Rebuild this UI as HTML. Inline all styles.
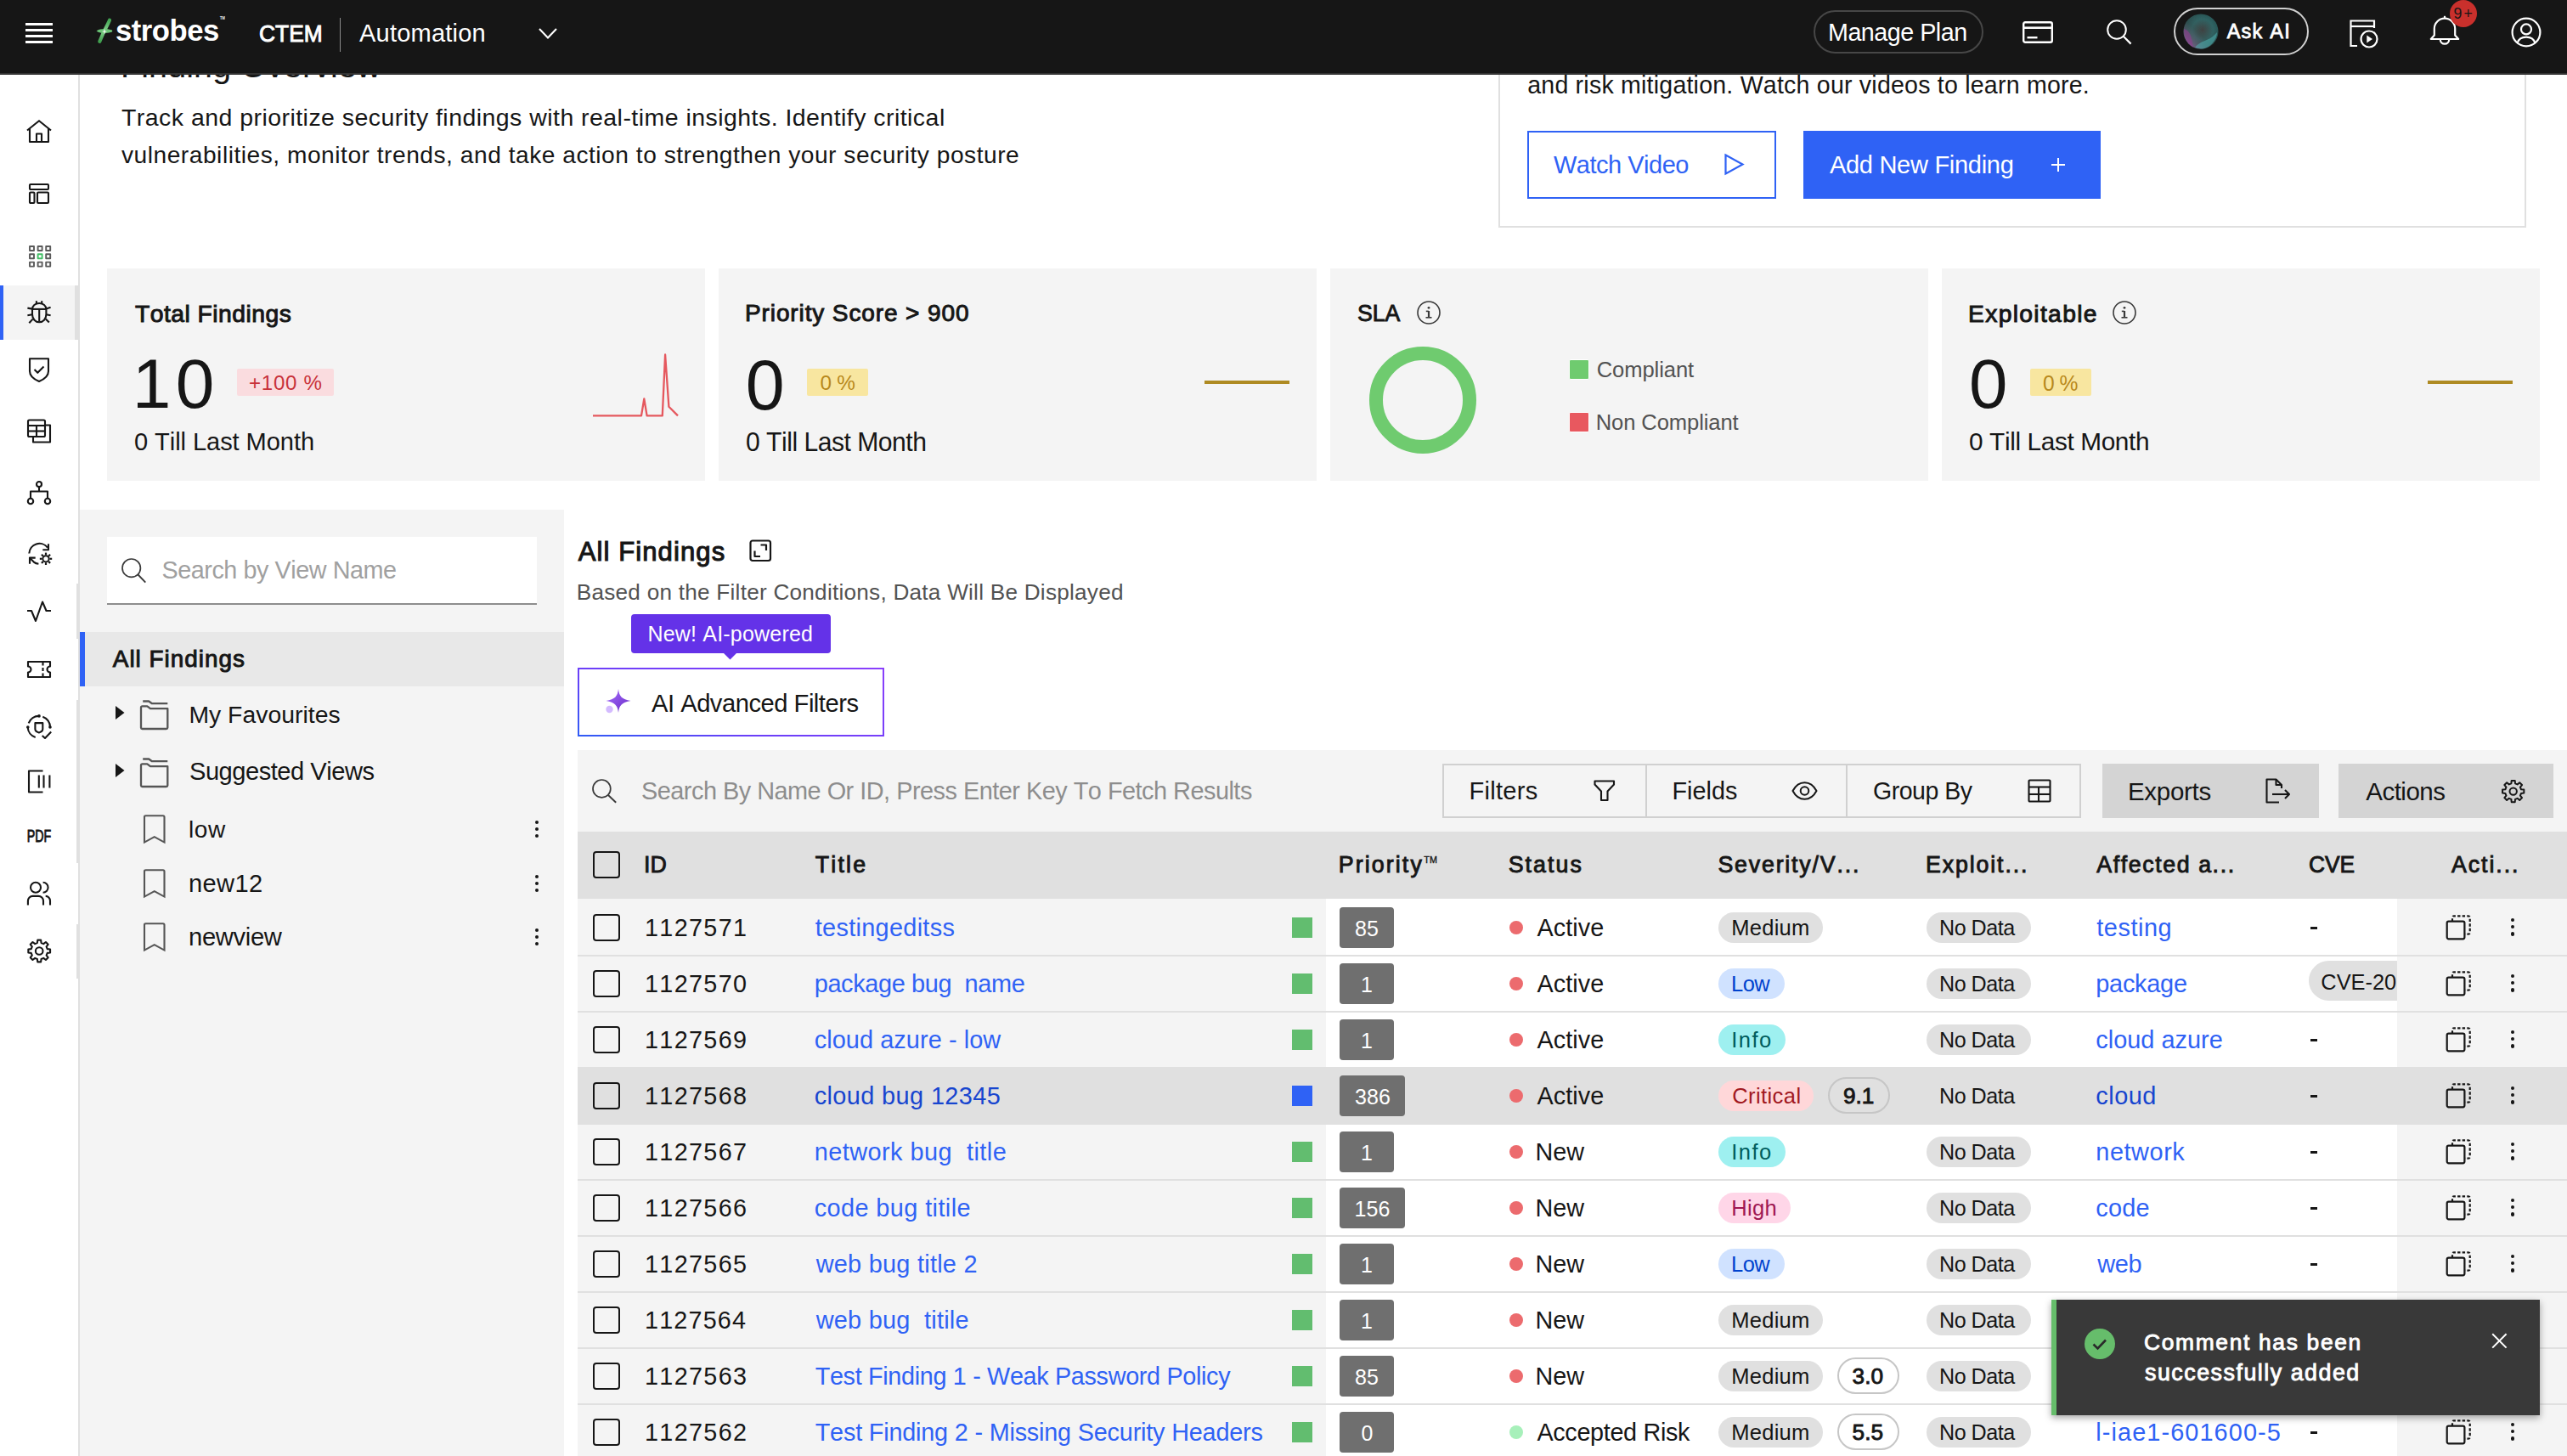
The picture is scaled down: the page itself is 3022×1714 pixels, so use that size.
<!DOCTYPE html><html><head><meta charset="utf-8"><style>*{margin:0;padding:0;box-sizing:border-box}
html,body{width:3022px;height:1714px;overflow:hidden;background:#ffffff;font-family:"Liberation Sans", sans-serif}
.t{position:absolute;white-space:nowrap;line-height:1;font-family:"Liberation Sans", sans-serif;font-kerning:none}
svg{overflow:visible}</style></head><body><div style="position:absolute;left:94px;top:600px;width:570px;height:1114px;background:#f4f4f4"></div><div class="t" style="left:142.0px;top:58.4px;font-size:39.4px;font-weight:400;color:#161616;letter-spacing:0.14px;">Finding Overview</div><div class="t" style="left:143.0px;top:124.2px;font-size:28.49px;font-weight:400;color:#161616;letter-spacing:0.46px;">Track and prioritize security findings with real-time insights. Identify critical</div><div class="t" style="left:143.0px;top:168.5px;font-size:28.15px;font-weight:400;color:#161616;letter-spacing:0.52px;">vulnerabilities, monitor trends, and take action to strengthen your security posture</div><div style="position:absolute;left:1764px;top:40px;width:1210px;height:228px;border:2px solid #e0e0e0;border-top:none;background:#fff"></div><div class="t" style="left:1798.2px;top:86.3px;font-size:28.57px;font-weight:400;color:#161616;letter-spacing:0.21px;">and risk mitigation. Watch our videos to learn more.</div><div style="position:absolute;left:1798px;top:154px;width:293px;height:80px;border:2px solid #2f62f5;background:#fff"></div><div class="t" style="left:1828.8px;top:180.1px;font-size:29.22px;font-weight:400;color:#2f62f5;letter-spacing:-0.50px;transform:scaleX(0.9925);transform-origin:0 0;">Watch Video</div><svg style="position:absolute;left:2028px;top:180px;" width="28" height="28" viewBox="0 0 28 28"><path d="M3.5 2.5 L23.5 13.5 L3.5 24.5 Z" fill="none" stroke="#2f62f5" stroke-width="2.2" stroke-linejoin="miter"/></svg><div style="position:absolute;left:2123px;top:154px;width:350px;height:80px;background:#2f62f5"></div><div class="t" style="left:2153.9px;top:179.9px;font-size:29.07px;font-weight:400;color:#fff;letter-spacing:-0.31px;">Add New Finding</div><div style="position:absolute;left:2414.8px;top:193px;width:16.4px;height:2.2px;background:#fff"></div><div style="position:absolute;left:2421.9px;top:185.8px;width:2.2px;height:16.3px;background:#fff"></div><div style="position:absolute;left:126px;top:316px;width:704px;height:250px;background:#f4f4f4"></div><div style="position:absolute;left:846px;top:316px;width:704px;height:250px;background:#f4f4f4"></div><div style="position:absolute;left:1566px;top:316px;width:704px;height:250px;background:#f4f4f4"></div><div style="position:absolute;left:2286px;top:316px;width:704px;height:250px;background:#f4f4f4"></div><div class="t" style="left:159.0px;top:354.5px;font-size:28.3px;font-weight:400;color:#161616;letter-spacing:0.47px;-webkit-text-stroke:0.98px #161616;">Total Findings</div><div class="t" style="left:155.8px;top:411.1px;font-size:81.98px;font-weight:400;color:#161616;letter-spacing:5.41px;">10</div><div style="position:absolute;left:279px;top:434px;width:114.4px;height:31.6px;background:#fadcdf;border-radius:2px"></div><div class="t" style="left:293.0px;top:439.1px;font-size:24.13px;font-weight:400;color:#c8323a;letter-spacing:0.69px;">+100 %</div><div class="t" style="left:158.0px;top:505.9px;font-size:29.07px;font-weight:400;color:#161616;letter-spacing:-0.07px;">0 Till Last Month</div><svg style="position:absolute;left:690px;top:410px;" width="120" height="90" viewBox="0 0 120 90"><polyline points="8,79.4 65,79.4 68.3,59.5 71.6,79.4 89.8,79.4 93.1,7.5 97.4,68.8 108,79.4" fill="none" stroke="#e5585e" stroke-width="2.3" stroke-linejoin="round"/></svg><div class="t" style="left:877.0px;top:354.9px;font-size:28.03px;font-weight:400;color:#161616;letter-spacing:0.88px;-webkit-text-stroke:0.97px #161616;">Priority Score &gt; 900</div><div class="t" style="left:877.8px;top:412.0px;font-size:82.5px;font-weight:400;color:#161616;letter-spacing:0.00px;">0</div><div style="position:absolute;left:949.6px;top:434px;width:72.2px;height:32px;background:#f8e6a0;border-radius:2px"></div><div class="t" style="left:965.5px;top:438.5px;font-size:24.35px;font-weight:400;color:#b8891c;letter-spacing:-0.30px;">0 %</div><div class="t" style="left:878.0px;top:505.1px;font-size:30.52px;font-weight:400;color:#161616;letter-spacing:-0.50px;transform:scaleX(0.9864);transform-origin:0 0;">0 Till Last Month</div><div style="position:absolute;left:1418px;top:447.6px;width:100px;height:4px;background:#ae8a22"></div><div class="t" style="left:1598.0px;top:355.0px;font-size:27.47px;font-weight:400;color:#161616;letter-spacing:0.00px;-webkit-text-stroke:0.95px #161616;transform:scaleX(0.9690);transform-origin:0 0;">SLA</div><svg style="position:absolute;left:1668px;top:354px;" width="28" height="28" viewBox="0 0 28 28"><circle cx="14" cy="14" r="13" fill="none" stroke="#393939" stroke-width="1.6"/><rect x="12.9" y="12" width="2.2" height="8" fill="#393939"/><rect x="10.5" y="19" width="7" height="1.6" fill="#393939"/><rect x="10.8" y="11.6" width="3" height="1.6" fill="#393939"/><circle cx="14" cy="8.3" r="1.4" fill="#393939"/></svg><svg style="position:absolute;left:1600px;top:396px;" width="150" height="150" viewBox="0 0 150 150"><circle cx="75" cy="75" r="55" fill="none" stroke="#6fcb6f" stroke-width="16"/></svg><div style="position:absolute;left:1847px;top:423px;width:24px;height:24px;background:#6fcb6f;border:1px solid #fff;border-radius:2px"></div><div style="position:absolute;left:1847px;top:485px;width:24px;height:24px;background:#e8585f;border:1px solid #fff;border-radius:2px"></div><div class="t" style="left:1879.7px;top:423.4px;font-size:25.58px;font-weight:400;color:#525252;letter-spacing:-0.09px;">Compliant</div><div class="t" style="left:1878.7px;top:484.8px;font-size:25.58px;font-weight:400;color:#525252;letter-spacing:-0.10px;">Non Compliant</div><div class="t" style="left:2317.0px;top:354.6px;font-size:28.26px;font-weight:400;color:#161616;letter-spacing:1.33px;-webkit-text-stroke:0.97px #161616;">Exploitable</div><svg style="position:absolute;left:2487px;top:354px;" width="28" height="28" viewBox="0 0 28 28"><circle cx="14" cy="14" r="13" fill="none" stroke="#393939" stroke-width="1.6"/><rect x="12.9" y="12" width="2.2" height="8" fill="#393939"/><rect x="10.5" y="19" width="7" height="1.6" fill="#393939"/><rect x="10.8" y="11.6" width="3" height="1.6" fill="#393939"/><circle cx="14" cy="8.3" r="1.4" fill="#393939"/></svg><div class="t" style="left:2318.0px;top:411.4px;font-size:81.64px;font-weight:400;color:#161616;letter-spacing:0.00px;">0</div><div style="position:absolute;left:2390px;top:434px;width:72px;height:31.5px;background:#f8e6a0;border-radius:2px"></div><div class="t" style="left:2404.8px;top:438.7px;font-size:25.35px;font-weight:400;color:#b8891c;letter-spacing:-0.50px;transform:scaleX(0.9730);transform-origin:0 0;">0 %</div><div class="t" style="left:2318.0px;top:505.3px;font-size:29.8px;font-weight:400;color:#161616;letter-spacing:-0.38px;">0 Till Last Month</div><div style="position:absolute;left:2857.5px;top:448px;width:100.5px;height:4px;background:#ae8a22"></div><div style="position:absolute;left:0px;top:88px;width:92px;height:1626px;background:#fff"></div><div style="position:absolute;left:92px;top:88px;width:2px;height:1626px;background:#e0e0e0"></div><div style="position:absolute;left:90px;top:687px;width:4px;height:65px;background:#e0e0e0"></div><div style="position:absolute;left:90px;top:824px;width:4px;height:192px;background:#e0e0e0"></div><div style="position:absolute;left:90px;top:1088px;width:4px;height:64px;background:#e0e0e0"></div><div style="position:absolute;left:4px;top:336px;width:86px;height:64px;background:#f4f4f4"></div><div style="position:absolute;left:88px;top:336px;width:4px;height:64px;background:#e0e0e0"></div><div style="position:absolute;left:0px;top:336px;width:4px;height:64px;background:#2f62f5"></div><svg style="position:absolute;left:31px;top:141px;" width="30" height="27" viewBox="0 0 30 27"><g fill="none" stroke="#161616" stroke-width="2.1" stroke-linecap="butt" stroke-linejoin="round"><polyline points="1,12.5 15,1.2 29,12.5"/><polyline points="4,10 4,26 26,26 26,10"/><polyline points="12,26 12,16.5 18,16.5 18,26"/></g></svg><svg style="position:absolute;left:34px;top:216px;" width="24" height="24" viewBox="0 0 24 24"><g fill="none" stroke="#161616" stroke-width="2.1" stroke-linecap="butt" stroke-linejoin="round"><rect x="1" y="1" width="22" height="6" rx="1"/><rect x="1" y="10.5" width="5.5" height="12.5" rx="1"/><rect x="10" y="10.5" width="13" height="12.5" rx="1"/></g></svg><svg style="position:absolute;left:34px;top:289px;" width="26" height="25" viewBox="0 0 26 25"><g fill="none" stroke="#161616" stroke-width="1.9" stroke-linecap="butt" stroke-linejoin="round"><rect x="1.0" y="1.0" width="5" height="5" stroke="#5a5a5a"/><rect x="10.6" y="1.0" width="5" height="5" stroke="#5a5a5a"/><rect x="20.2" y="1.0" width="5" height="5" stroke="#5a5a5a"/><rect x="1.0" y="10.3" width="5" height="5" stroke="#5a5a5a"/><rect x="10.6" y="10.3" width="5" height="5" stroke="#42be65"/><rect x="20.2" y="10.3" width="5" height="5" stroke="#5a5a5a"/><rect x="1.0" y="19.6" width="5" height="5" stroke="#5a5a5a"/><rect x="10.6" y="19.6" width="5" height="5" stroke="#5a5a5a"/><rect x="20.2" y="19.6" width="5" height="5" stroke="#5a5a5a"/></g></svg><svg style="position:absolute;left:31px;top:353px;" width="30" height="29" viewBox="0 0 30 29"><g fill="none" stroke="#161616" stroke-width="2.1" stroke-linecap="butt" stroke-linejoin="round"><path d="M7 11 C7 7 10.5 4 15.2 4 C19.9 4 23.4 7 23.4 11 V17 C23.4 22.5 19.7 26.3 15.2 26.3 C10.7 26.3 7 22.5 7 17 Z"/><line x1="7" y1="10.9" x2="23.4" y2="10.9"/><line x1="15.2" y1="10.9" x2="15.2" y2="25.8"/><line x1="11.9" y1="1.2" x2="11.9" y2="5"/><line x1="18.2" y1="1.2" x2="18.2" y2="5"/><line x1="1.4" y1="9.6" x2="7" y2="10.6"/><line x1="23.4" y1="10.6" x2="28.6" y2="8.8"/><line x1="1.4" y1="18.2" x2="7" y2="17.2"/><line x1="23.4" y1="17.2" x2="28.6" y2="18.2"/><line x1="3.3" y1="27.2" x2="7.6" y2="22.6"/><line x1="22.8" y1="22.6" x2="26.8" y2="26.6"/></g></svg><svg style="position:absolute;left:34px;top:421px;" width="24" height="29" viewBox="0 0 24 29"><g fill="none" stroke="#161616" stroke-width="2.1" stroke-linecap="butt" stroke-linejoin="round"><path d="M1 1.2 H23 V16 C23 22 18 25.5 12 28 C6 25.5 1 22 1 16 Z"/><polyline points="6.5,14 10.3,17.8 17.5,10.6"/></g></svg><svg style="position:absolute;left:32px;top:493px;" width="28" height="29" viewBox="0 0 28 29"><g fill="none" stroke="#161616" stroke-width="2.1" stroke-linecap="butt" stroke-linejoin="round"><rect x="1" y="1.5" width="20" height="19.5" rx="1.5"/><line x1="1" y1="8" x2="21" y2="8"/><line x1="1" y1="14.5" x2="21" y2="14.5"/><line x1="11" y1="8" x2="11" y2="21"/><polyline points="7,21 7,27.5 27,27.5 27,7.5 21,7.5"/></g></svg><svg style="position:absolute;left:32px;top:566px;" width="28" height="28" viewBox="0 0 28 28"><g fill="none" stroke="#161616" stroke-width="2.1" stroke-linecap="butt" stroke-linejoin="round"><circle cx="14" cy="4" r="3"/><line x1="14" y1="7" x2="14" y2="12.5"/><polyline points="4,20.5 4,12.5 24,12.5 24,20.5"/><circle cx="4" cy="24" r="3.2"/><circle cx="24" cy="24" r="3.2"/></g></svg><svg style="position:absolute;left:33px;top:638px;" width="30" height="30" viewBox="0 0 30 30"><g fill="none" stroke="#161616" stroke-width="2.1" stroke-linecap="butt" stroke-linejoin="round"><path d="M1.3 13.5 A12.2 12.2 0 0 1 23 6.5"/><polyline points="24,2.2 24,9.3 17.3,9.3"/><polyline points="8.7,18.6 2,18.6 2,25.7"/><path d="M2.3 18.9 L6.8 23.6 C8.5 25 10.5 25.6 12.4 25.8"/><circle cx="21" cy="19.8" r="3.6" stroke-width="1.9"/><line x1="21.00" y1="15.40" x2="21.00" y2="12.60" stroke-width="2.2"/><line x1="24.11" y1="16.69" x2="26.09" y2="14.71" stroke-width="2.2"/><line x1="25.40" y1="19.80" x2="28.20" y2="19.80" stroke-width="2.2"/><line x1="24.11" y1="22.91" x2="26.09" y2="24.89" stroke-width="2.2"/><line x1="21.00" y1="24.20" x2="21.00" y2="27.00" stroke-width="2.2"/><line x1="17.89" y1="22.91" x2="15.91" y2="24.89" stroke-width="2.2"/><line x1="16.60" y1="19.80" x2="13.80" y2="19.80" stroke-width="2.2"/><line x1="17.89" y1="16.69" x2="15.91" y2="14.71" stroke-width="2.2"/></g></svg><svg style="position:absolute;left:32px;top:707px;" width="28" height="26" viewBox="0 0 28 26"><g fill="none" stroke="#161616" stroke-width="2.1" stroke-linecap="butt" stroke-linejoin="round"><polyline points="0,12 5,12 10,24 18,1.5 22.5,12 28,12"/></g></svg><svg style="position:absolute;left:32px;top:778px;" width="28" height="20" viewBox="0 0 28 20"><g fill="none" stroke="#161616" stroke-width="2.1" stroke-linecap="butt" stroke-linejoin="round"><path d="M1 1 H27 V6.5 A3.2 3.2 0 0 0 27 13.5 V19 H1 V13.5 A3.2 3.2 0 0 0 1 6.5 Z"/><line x1="18.5" y1="1" x2="18.5" y2="5.5"/><line x1="18.5" y1="8" x2="18.5" y2="12"/><line x1="18.5" y1="14.5" x2="18.5" y2="19"/></g></svg><svg style="position:absolute;left:31px;top:841px;" width="31" height="30" viewBox="0 0 31 30"><g fill="none" stroke="#161616" stroke-width="2.1" stroke-linecap="butt" stroke-linejoin="round"><path d="M2.7 10.4 A13 13 0 0 1 15 1.9"/><path d="M19.3 2.7 A13 13 0 0 1 28 15"/><path d="M1.7 15 A13 13 0 0 0 10.7 27"/><circle cx="15" cy="1.9" r="1.8" fill="#161616" stroke="none"/><circle cx="28" cy="15" r="1.8" fill="#161616" stroke="none"/><circle cx="1.8" cy="15" r="1.8" fill="#161616" stroke="none"/><path d="M10.4 10.1 H19.3 V17.3 C19.3 19.3 17.2 20.8 14.85 21.4 C12.5 20.8 10.4 19.3 10.4 17.3 Z"/><polyline points="18.7,24.9 22,28 29.2,20.6"/></g></svg><svg style="position:absolute;left:33px;top:906px;" width="27" height="28" viewBox="0 0 27 28"><g fill="none" stroke="#161616" stroke-width="2.1" stroke-linecap="butt" stroke-linejoin="round"><polyline points="17.5,1.5 1,1.5 1,26.5 17.5,26.5"/><line x1="12.8" y1="6.5" x2="12.8" y2="21.5"/><line x1="18.5" y1="6.5" x2="18.5" y2="21.5"/><line x1="25.4" y1="6.5" x2="25.4" y2="21.5"/></g></svg><svg style="position:absolute;left:31px;top:975px;" width="30" height="18" viewBox="0 0 30 18"><text x="0.8" y="16" textLength="28.4" lengthAdjust="spacingAndGlyphs" font-family="Liberation Sans" font-weight="400" font-size="19.6" fill="#161616" stroke="#161616" stroke-width="0.9">PDF</text></svg><svg style="position:absolute;left:32px;top:1037px;" width="30" height="30" viewBox="0 0 30 30"><g fill="none" stroke="#161616" stroke-width="2.1" stroke-linecap="butt" stroke-linejoin="round"><circle cx="10" cy="7.8" r="6"/><path d="M18.6 1.8 A6 6 0 0 1 18.6 13.8"/><path d="M0.9 28.5 V23.6 C0.9 20.5 3.5 17.9 6.5 17.9 H13.1 C16.5 17.9 19 20.5 19 23.6 V28.5"/><path d="M21.7 17.9 C24.5 17.9 27 20.5 27 23.3 V28.5"/></g></svg><svg style="position:absolute;left:32px;top:1105px;" width="29" height="29" viewBox="0 0 29 29"><g fill="none" stroke="#161616" stroke-width="2.1" stroke-linecap="butt" stroke-linejoin="round"><path d="M23.71 12.14 L27.06 12.57 L27.06 16.43 L23.71 16.86 L22.60 19.55 L24.66 22.22 L21.92 24.96 L19.25 22.90 L16.56 24.01 L16.13 27.36 L12.27 27.36 L11.84 24.01 L9.15 22.90 L6.48 24.96 L3.74 22.22 L5.80 19.55 L4.69 16.86 L1.34 16.43 L1.34 12.57 L4.69 12.14 L5.80 9.45 L3.74 6.78 L6.48 4.04 L9.15 6.10 L11.84 4.99 L12.27 1.64 L16.13 1.64 L16.56 4.99 L19.25 6.10 L21.92 4.04 L24.66 6.78 L22.60 9.45 Z"/><circle cx="14.2" cy="14.5" r="4.3"/></g></svg><div style="position:absolute;left:126px;top:632px;width:506px;height:80px;background:#fff;border-bottom:2px solid #8d8d8d"></div><svg style="position:absolute;left:142.3px;top:656.0px;" width="31.299999999999983" height="31.700000000000045" viewBox="0 0 31.299999999999983 31.700000000000045"><circle cx="12.7" cy="12.7" r="10.7" fill="none" stroke="#393939" stroke-width="1.7"/><line x1="20.264899999999997" y1="20.264899999999997" x2="29.299999999999983" y2="29.700000000000045" stroke="#393939" stroke-width="1.87"/></svg><div class="t" style="left:190.4px;top:657.0px;font-size:28.78px;font-weight:400;color:#a0a0a0;letter-spacing:-0.44px;">Search by View Name</div><div style="position:absolute;left:94px;top:744px;width:570px;height:64px;background:#e8e8e8"></div><div style="position:absolute;left:94px;top:744px;width:6px;height:64px;background:#2f62f5"></div><div class="t" style="left:132.8px;top:762.2px;font-size:27.89px;font-weight:400;color:#161616;letter-spacing:1.00px;-webkit-text-stroke:0.96px #161616;">All Findings</div><svg style="position:absolute;left:136px;top:831px;" width="11" height="16" viewBox="0 0 11 16"><path d="M0 0 L10.5 8 L0 16 Z" fill="#161616"/></svg><svg style="position:absolute;left:165px;top:824px;" width="35" height="36" viewBox="0 0 35 36"><g fill="none" stroke="#555555" stroke-width="2.3" stroke-linejoin="round"><path d="M3 7.3 H8.3 L12 10.2 H32.3 V32.6 A1.5 1.5 0 0 1 30.8 34 H2.5 A1.5 1.5 0 0 1 1 32.6 V8.8 A1.5 1.5 0 0 1 2.5 7.3 Z"/><path d="M3.2 1.5 H10.2 L14 4.2 H32.3"/></g></svg><div class="t" style="left:222.4px;top:826.5px;font-size:28.34px;font-weight:400;color:#161616;letter-spacing:0.03px;">My Favourites</div><svg style="position:absolute;left:136px;top:898.5px;" width="11" height="16" viewBox="0 0 11 16"><path d="M0 0 L10.5 8 L0 16 Z" fill="#161616"/></svg><svg style="position:absolute;left:165px;top:891.5px;" width="35" height="36" viewBox="0 0 35 36"><g fill="none" stroke="#555555" stroke-width="2.3" stroke-linejoin="round"><path d="M3 7.3 H8.3 L12 10.2 H32.3 V32.6 A1.5 1.5 0 0 1 30.8 34 H2.5 A1.5 1.5 0 0 1 1 32.6 V8.8 A1.5 1.5 0 0 1 2.5 7.3 Z"/><path d="M3.2 1.5 H10.2 L14 4.2 H32.3"/></g></svg><div class="t" style="left:223.4px;top:892.8px;font-size:29.8px;font-weight:400;color:#161616;letter-spacing:-0.50px;transform:scaleX(0.9763);transform-origin:0 0;">Suggested Views</div><svg style="position:absolute;left:168px;top:959px;" width="28" height="35" viewBox="0 0 28 35"><path d="M2 32.6 V2.8 Q2 1.2 3.6 1.2 H23.9 Q25.5 1.2 25.5 2.8 V32.6 L13.75 26.2 Z" fill="none" stroke="#555555" stroke-width="2.1" stroke-linejoin="miter"/></svg><div class="t" style="left:222.0px;top:962.8px;font-size:28.02px;font-weight:400;color:#161616;letter-spacing:0.60px;">low</div><div style="position:absolute;left:629.8px;top:965.5px;width:4.4px;height:4.4px;background:#161616;border-radius:50%"></div><div style="position:absolute;left:629.8px;top:973.5px;width:4.4px;height:4.4px;background:#161616;border-radius:50%"></div><div style="position:absolute;left:629.8px;top:981.5px;width:4.4px;height:4.4px;background:#161616;border-radius:50%"></div><svg style="position:absolute;left:168px;top:1023px;" width="28" height="35" viewBox="0 0 28 35"><path d="M2 32.6 V2.8 Q2 1.2 3.6 1.2 H23.9 Q25.5 1.2 25.5 2.8 V32.6 L13.75 26.2 Z" fill="none" stroke="#555555" stroke-width="2.1" stroke-linejoin="miter"/></svg><div class="t" style="left:222.0px;top:1025.9px;font-size:29.07px;font-weight:400;color:#161616;letter-spacing:0.38px;">new12</div><div style="position:absolute;left:629.8px;top:1029.5px;width:4.4px;height:4.4px;background:#161616;border-radius:50%"></div><div style="position:absolute;left:629.8px;top:1037.5px;width:4.4px;height:4.4px;background:#161616;border-radius:50%"></div><div style="position:absolute;left:629.8px;top:1045.5px;width:4.4px;height:4.4px;background:#161616;border-radius:50%"></div><svg style="position:absolute;left:168px;top:1086.3px;" width="28" height="35" viewBox="0 0 28 35"><path d="M2 32.6 V2.8 Q2 1.2 3.6 1.2 H23.9 Q25.5 1.2 25.5 2.8 V32.6 L13.75 26.2 Z" fill="none" stroke="#555555" stroke-width="2.1" stroke-linejoin="miter"/></svg><div class="t" style="left:222.0px;top:1089.1px;font-size:29.2px;font-weight:400;color:#161616;letter-spacing:-0.34px;">newview</div><div style="position:absolute;left:629.8px;top:1092.8px;width:4.4px;height:4.4px;background:#161616;border-radius:50%"></div><div style="position:absolute;left:629.8px;top:1100.8px;width:4.4px;height:4.4px;background:#161616;border-radius:50%"></div><div style="position:absolute;left:629.8px;top:1108.8px;width:4.4px;height:4.4px;background:#161616;border-radius:50%"></div><div class="t" style="left:680.8px;top:633.6px;font-size:31.06px;font-weight:400;color:#161616;letter-spacing:1.08px;-webkit-text-stroke:1.07px #161616;">All Findings</div><svg style="position:absolute;left:882px;top:635px;" width="27" height="27" viewBox="0 0 27 27"><g fill="none" stroke="#161616" stroke-width="2.2" stroke-linecap="butt" stroke-linejoin="round"><rect x="1.5" y="1.5" width="23.5" height="23.5" rx="2.5"/><polyline points="6.5,13.5 6.5,20 13,20"/><polyline points="13.5,6.5 20,6.5 20,13"/></g></svg><div class="t" style="left:678.8px;top:684.4px;font-size:26.16px;font-weight:400;color:#525252;letter-spacing:0.24px;">Based on the Filter Conditions, Data Will Be Displayed</div><div style="position:absolute;left:743px;top:723px;width:235px;height:45.6px;background:#6432e8;border-radius:4px"></div><svg style="position:absolute;left:851px;top:768px;" width="17" height="9" viewBox="0 0 17 9"><path d="M0 0 L8.5 8.5 L17 0 Z" fill="#6432e8"/></svg><div class="t" style="left:762.4px;top:734.3px;font-size:25.0px;font-weight:400;color:#fff;letter-spacing:0.20px;">New! AI-powered</div><div style="position:absolute;left:680px;top:786px;width:361px;height:80.6px;background:linear-gradient(20deg,#2f5cf5 0%,#6a3ff8 35%,#8a3ffc 100%);"></div><div style="position:absolute;left:682px;top:788px;width:357px;height:76.6px;background:#fff"></div><svg style="position:absolute;left:710px;top:808px;" width="36" height="34" viewBox="0 0 36 34"><defs><linearGradient id="sg" x1="0" y1="0" x2="1" y2="1"><stop offset="0" stop-color="#a56eff"/><stop offset="1" stop-color="#6929c4"/></linearGradient></defs><path d="M18 3 C19 12 22 15 32.5 17 C22 19 19 22 18 31 C17 22 14 19 3.5 17 C14 15 17 12 18 3 Z" fill="url(#sg)"/><circle cx="7.5" cy="27" r="4.2" fill="#d4bbff"/></svg><div class="t" style="left:766.7px;top:813.4px;font-size:29.36px;font-weight:400;color:#161616;letter-spacing:-0.50px;transform:scaleX(0.9936);transform-origin:0 0;">AI Advanced Filters</div><div style="position:absolute;left:680px;top:883px;width:2342px;height:96px;background:#f4f4f4"></div><svg style="position:absolute;left:696.4px;top:915.6px;" width="31.200000000000045" height="30.799999999999955" viewBox="0 0 31.200000000000045 30.799999999999955"><circle cx="12.4" cy="12.4" r="10.4" fill="none" stroke="#393939" stroke-width="1.7"/><line x1="19.7528" y1="19.7528" x2="29.200000000000045" y2="28.799999999999955" stroke="#393939" stroke-width="1.87"/></svg><div class="t" style="left:755.2px;top:917.0px;font-size:29.07px;font-weight:400;color:#8d8d8d;letter-spacing:-0.50px;transform:scaleX(0.9928);transform-origin:0 0;">Search By Name Or ID, Press Enter Key To Fetch Results</div><div style="position:absolute;left:1698px;top:899px;width:752px;height:64px;border:2px solid #d0d0d0"></div><div style="position:absolute;left:1937px;top:899px;width:2px;height:64px;background:#d0d0d0"></div><div style="position:absolute;left:2173px;top:899px;width:2px;height:64px;background:#d0d0d0"></div><div class="t" style="left:1729.5px;top:916.9px;font-size:29.07px;font-weight:400;color:#161616;letter-spacing:0.27px;">Filters</div><svg style="position:absolute;left:1876px;top:918px;" width="27" height="27" viewBox="0 0 27 27"><g fill="none" stroke="#161616" stroke-width="2.1" stroke-linecap="butt" stroke-linejoin="round"><path d="M1.5 1.5 H24 V5.5 L16.5 13.5 V24 H9 V13.5 L1.5 5.5 Z"/></g></svg><div class="t" style="left:1968.5px;top:916.9px;font-size:28.78px;font-weight:400;color:#161616;letter-spacing:0.01px;">Fields</div><svg style="position:absolute;left:2109px;top:919px;" width="32" height="24" viewBox="0 0 32 24"><g fill="none" stroke="#161616" stroke-width="2.0" stroke-linecap="butt" stroke-linejoin="round"><path d="M1.5 12 C5.5 4.5 10 2.2 15.5 2.2 C21 2.2 25.5 4.5 29.5 12 C25.5 19.5 21 21.8 15.5 21.8 C10 21.8 5.5 19.5 1.5 12 Z"/><circle cx="15.5" cy="12" r="4.8"/></g></svg><div class="t" style="left:2204.5px;top:916.9px;font-size:29.07px;font-weight:400;color:#161616;letter-spacing:-0.50px;transform:scaleX(0.9812);transform-origin:0 0;">Group By</div><svg style="position:absolute;left:2387px;top:917px;" width="29" height="29" viewBox="0 0 29 29"><g fill="none" stroke="#161616" stroke-width="2.1" stroke-linecap="butt" stroke-linejoin="round"><rect x="1.5" y="1.5" width="25" height="25" rx="1"/><line x1="1.5" y1="9.5" x2="26.5" y2="9.5"/><line x1="1.5" y1="18" x2="26.5" y2="18"/><line x1="13" y1="9.5" x2="13" y2="26.5"/></g></svg><div style="position:absolute;left:2474.6px;top:899px;width:255px;height:63.5px;background:#d4d4d4"></div><div class="t" style="left:2505.0px;top:916.5px;font-size:29.51px;font-weight:400;color:#161616;letter-spacing:-0.31px;">Exports</div><svg style="position:absolute;left:2666px;top:916px;" width="32" height="31" viewBox="0 0 32 31"><g fill="none" stroke="#161616" stroke-width="2.1" stroke-linecap="butt" stroke-linejoin="round"><path d="M17 28.5 H2.5 V1.5 H13.5 L20 8 V12"/><polyline points="13.5,1.5 13.5,8 20,8"/><line x1="9" y1="19" x2="29" y2="19"/><polyline points="24,14 29,19 24,24"/></g></svg><div style="position:absolute;left:2753px;top:899px;width:253px;height:63.5px;background:#d4d4d4"></div><div class="t" style="left:2785.2px;top:916.5px;font-size:29.51px;font-weight:400;color:#161616;letter-spacing:-0.48px;">Actions</div><svg style="position:absolute;left:2944px;top:916.5px;" width="30" height="30" viewBox="0 0 30 30"><g fill="none" stroke="#161616" stroke-width="2.0" stroke-linecap="butt" stroke-linejoin="round"><path d="M24.02 12.29 L27.34 12.60 L27.34 16.60 L24.02 16.91 L22.92 19.55 L25.06 22.12 L22.22 24.96 L19.65 22.82 L17.01 23.92 L16.70 27.24 L12.70 27.24 L12.39 23.92 L9.75 22.82 L7.18 24.96 L4.34 22.12 L6.48 19.55 L5.38 16.91 L2.06 16.60 L2.06 12.60 L5.38 12.29 L6.48 9.65 L4.34 7.08 L7.18 4.24 L9.75 6.38 L12.39 5.28 L12.70 1.96 L16.70 1.96 L17.01 5.28 L19.65 6.38 L22.22 4.24 L25.06 7.08 L22.92 9.65 Z"/><circle cx="14.7" cy="14.6" r="4.2"/></g></svg><div style="position:absolute;left:680px;top:979px;width:2342px;height:79px;background:#e0e0e0"></div><div style="position:absolute;left:698px;top:1001.6px;width:32px;height:32px;border:2px solid #161616;border-radius:4px"></div><div class="t" style="left:758.0px;top:1005.1px;font-size:26.78px;font-weight:400;color:#161616;letter-spacing:0.00px;-webkit-text-stroke:0.92px #161616;">ID</div><div class="t" style="left:959.7px;top:1005.1px;font-size:26.78px;font-weight:400;color:#161616;letter-spacing:2.23px;-webkit-text-stroke:0.92px #161616;">Title</div><div class="t" style="left:1575.7px;top:1005.1px;font-size:26.78px;font-weight:400;color:#161616;letter-spacing:2.12px;-webkit-text-stroke:0.92px #161616;">Priority</div><div class="t" style="left:1676.3px;top:1007.4px;font-size:10.77px;font-weight:400;color:#161616;letter-spacing:0.02px;-webkit-text-stroke:0.37px #161616;">TM</div><div class="t" style="left:1775.7px;top:1005.1px;font-size:26.78px;font-weight:400;color:#161616;letter-spacing:2.04px;-webkit-text-stroke:0.92px #161616;">Status</div><div class="t" style="left:2022.4px;top:1005.1px;font-size:26.78px;font-weight:400;color:#161616;letter-spacing:1.81px;-webkit-text-stroke:0.92px #161616;">Severity/V...</div><div class="t" style="left:2267.0px;top:1005.1px;font-size:26.78px;font-weight:400;color:#161616;letter-spacing:1.87px;-webkit-text-stroke:0.92px #161616;">Exploit...</div><div class="t" style="left:2468.3px;top:1005.1px;font-size:26.78px;font-weight:400;color:#161616;letter-spacing:1.58px;-webkit-text-stroke:0.92px #161616;">Affected a...</div><div class="t" style="left:2717.7px;top:1005.1px;font-size:26.78px;font-weight:400;color:#161616;letter-spacing:0.00px;-webkit-text-stroke:0.92px #161616;transform:scaleX(0.9834);transform-origin:0 0;">CVE</div><div class="t" style="left:2886.0px;top:1005.1px;font-size:26.78px;font-weight:400;color:#161616;letter-spacing:1.92px;-webkit-text-stroke:0.92px #161616;">Acti...</div><div style="position:absolute;left:680px;top:1058px;width:881px;height:66px;background:#f4f4f4"></div><div style="position:absolute;left:1561px;top:1058px;width:1261px;height:66px;background:#fff"></div><div style="position:absolute;left:2822px;top:1058px;width:200px;height:66px;background:#f4f4f4"></div><div style="position:absolute;left:698px;top:1075.7px;width:32px;height:32px;border:2px solid #161616;border-radius:4px"></div><div class="t" style="left:759.0px;top:1078.1px;font-size:28.78px;font-weight:400;color:#161616;letter-spacing:1.34px;">1127571</div><div class="t" style="left:959.7px;top:1078.0px;font-size:28.9px;font-weight:400;color:#2f62f5;letter-spacing:0.30px;white-space:pre">testingeditss</div><div style="position:absolute;left:1521px;top:1080px;width:24px;height:24px;background:#62bd6f"></div><div style="position:absolute;left:1577px;top:1068.1px;width:64px;height:47.7px;background:#6f6f6f;border-radius:4px"></div><div class="t" style="left:1595.0px;top:1080.6px;font-size:25px;font-weight:400;color:#fff;letter-spacing:0.00px;">85</div><div style="position:absolute;left:1777px;top:1084px;width:16px;height:16px;background:#ec6b6e;border-radius:50%"></div><div class="t" style="left:1809.4px;top:1078.1px;font-size:28.78px;font-weight:400;color:#161616;letter-spacing:0.09px;">Active</div><div style="position:absolute;left:2023px;top:1074px;width:123px;height:36px;background:#e0e0e0;border-radius:18px"></div><div class="t" style="left:2038.2px;top:1080.1px;font-size:25.58px;font-weight:400;color:#161616;letter-spacing:0.23px;">Medium</div><div style="position:absolute;left:2268px;top:1074px;width:123px;height:36px;background:#e0e0e0;border-radius:18px"></div><div class="t" style="left:2283.2px;top:1080.1px;font-size:25.58px;font-weight:400;color:#161616;letter-spacing:-0.50px;transform:scaleX(0.9821);transform-origin:0 0;">No Data</div><div class="t" style="left:2468.3px;top:1078.0px;font-size:28.9px;font-weight:400;color:#2f62f5;letter-spacing:0.54px;">testing</div><div style="position:absolute;left:2720px;top:1091px;width:7.5px;height:3px;background:#161616"></div><svg style="position:absolute;left:2879px;top:1076.5px;" width="31" height="31" viewBox="0 0 31 31"><g fill="none" stroke="#161616" stroke-width="2.2" stroke-linecap="butt" stroke-linejoin="round"><rect x="1.7" y="7.6" width="20.7" height="20.7" rx="2"/><path d="M8 7.6 V3.3 Q8 1.3 10 1.3 H26.7 Q28.7 1.3 28.7 3.3 V20.7 Q28.7 22.7 26.7 22.7 H22.4" stroke-dasharray="3.4 2.2"/></g></svg><div style="position:absolute;left:2955.6px;top:1080.5px;width:4.8px;height:4.8px;background:#161616;border-radius:50%"></div><div style="position:absolute;left:2955.6px;top:1088.7px;width:4.8px;height:4.8px;background:#161616;border-radius:50%"></div><div style="position:absolute;left:2955.6px;top:1096.9px;width:4.8px;height:4.8px;background:#161616;border-radius:50%"></div><div style="position:absolute;left:680px;top:1124px;width:881px;height:66px;background:#f4f4f4"></div><div style="position:absolute;left:1561px;top:1124px;width:1261px;height:66px;background:#fff"></div><div style="position:absolute;left:2822px;top:1124px;width:200px;height:66px;background:#f4f4f4"></div><div style="position:absolute;left:680px;top:1124px;width:2342px;height:2px;background:#e0e0e0"></div><div style="position:absolute;left:698px;top:1141.7px;width:32px;height:32px;border:2px solid #161616;border-radius:4px"></div><div class="t" style="left:759.0px;top:1144.1px;font-size:28.78px;font-weight:400;color:#161616;letter-spacing:1.34px;">1127570</div><div class="t" style="left:958.7px;top:1144.0px;font-size:28.9px;font-weight:400;color:#2f62f5;letter-spacing:-0.36px;white-space:pre">package bug  name</div><div style="position:absolute;left:1521px;top:1146px;width:24px;height:24px;background:#62bd6f"></div><div style="position:absolute;left:1577px;top:1134.1px;width:64px;height:47.7px;background:#6f6f6f;border-radius:4px"></div><div class="t" style="left:1602.0px;top:1146.6px;font-size:25px;font-weight:400;color:#fff;letter-spacing:0.00px;">1</div><div style="position:absolute;left:1777px;top:1150px;width:16px;height:16px;background:#ec6b6e;border-radius:50%"></div><div class="t" style="left:1809.4px;top:1144.1px;font-size:28.78px;font-weight:400;color:#161616;letter-spacing:0.09px;">Active</div><div style="position:absolute;left:2023px;top:1140px;width:78.4px;height:36px;background:#d0e2ff;border-radius:18px"></div><div class="t" style="left:2038.2px;top:1146.1px;font-size:25.58px;font-weight:400;color:#0043ce;letter-spacing:-0.50px;transform:scaleX(0.9944);transform-origin:0 0;">Low</div><div style="position:absolute;left:2268px;top:1140px;width:123px;height:36px;background:#e0e0e0;border-radius:18px"></div><div class="t" style="left:2283.2px;top:1146.1px;font-size:25.58px;font-weight:400;color:#161616;letter-spacing:-0.50px;transform:scaleX(0.9821);transform-origin:0 0;">No Data</div><div class="t" style="left:2467.3px;top:1144.0px;font-size:28.9px;font-weight:400;color:#2f62f5;letter-spacing:-0.26px;">package</div><div style="position:absolute;left:2717.6px;top:1131.4px;width:140px;height:47px;background:#e0e0e0;border-radius:23.5px"></div><div class="t" style="left:2732.3px;top:1143.7px;font-size:25.4px;font-weight:400;color:#161616;letter-spacing:0.00px;">CVE-2019</div><div style="position:absolute;left:2822px;top:1126px;width:200px;height:64px;background:#f4f4f4"></div><svg style="position:absolute;left:2879px;top:1142.5px;" width="31" height="31" viewBox="0 0 31 31"><g fill="none" stroke="#161616" stroke-width="2.2" stroke-linecap="butt" stroke-linejoin="round"><rect x="1.7" y="7.6" width="20.7" height="20.7" rx="2"/><path d="M8 7.6 V3.3 Q8 1.3 10 1.3 H26.7 Q28.7 1.3 28.7 3.3 V20.7 Q28.7 22.7 26.7 22.7 H22.4" stroke-dasharray="3.4 2.2"/></g></svg><div style="position:absolute;left:2955.6px;top:1146.5px;width:4.8px;height:4.8px;background:#161616;border-radius:50%"></div><div style="position:absolute;left:2955.6px;top:1154.7px;width:4.8px;height:4.8px;background:#161616;border-radius:50%"></div><div style="position:absolute;left:2955.6px;top:1162.9px;width:4.8px;height:4.8px;background:#161616;border-radius:50%"></div><div style="position:absolute;left:680px;top:1190px;width:881px;height:66px;background:#f4f4f4"></div><div style="position:absolute;left:1561px;top:1190px;width:1261px;height:66px;background:#fff"></div><div style="position:absolute;left:2822px;top:1190px;width:200px;height:66px;background:#f4f4f4"></div><div style="position:absolute;left:680px;top:1190px;width:2342px;height:2px;background:#e0e0e0"></div><div style="position:absolute;left:698px;top:1207.7px;width:32px;height:32px;border:2px solid #161616;border-radius:4px"></div><div class="t" style="left:759.0px;top:1210.1px;font-size:28.78px;font-weight:400;color:#161616;letter-spacing:1.34px;">1127569</div><div class="t" style="left:958.7px;top:1210.0px;font-size:28.9px;font-weight:400;color:#2f62f5;letter-spacing:0.07px;white-space:pre">cloud azure - low</div><div style="position:absolute;left:1521px;top:1212px;width:24px;height:24px;background:#62bd6f"></div><div style="position:absolute;left:1577px;top:1200.1px;width:64px;height:47.7px;background:#6f6f6f;border-radius:4px"></div><div class="t" style="left:1602.0px;top:1212.6px;font-size:25px;font-weight:400;color:#fff;letter-spacing:0.00px;">1</div><div style="position:absolute;left:1777px;top:1216px;width:16px;height:16px;background:#ec6b6e;border-radius:50%"></div><div class="t" style="left:1809.4px;top:1210.1px;font-size:28.78px;font-weight:400;color:#161616;letter-spacing:0.09px;">Active</div><div style="position:absolute;left:2023px;top:1206px;width:79px;height:36px;background:#9ef0f0;border-radius:18px"></div><div class="t" style="left:2038.2px;top:1212.1px;font-size:25.58px;font-weight:400;color:#005d5d;letter-spacing:1.45px;">Info</div><div style="position:absolute;left:2268px;top:1206px;width:123px;height:36px;background:#e0e0e0;border-radius:18px"></div><div class="t" style="left:2283.2px;top:1212.1px;font-size:25.58px;font-weight:400;color:#161616;letter-spacing:-0.50px;transform:scaleX(0.9821);transform-origin:0 0;">No Data</div><div class="t" style="left:2467.3px;top:1210.0px;font-size:28.9px;font-weight:400;color:#2f62f5;letter-spacing:0.01px;">cloud azure</div><div style="position:absolute;left:2720px;top:1223px;width:7.5px;height:3px;background:#161616"></div><svg style="position:absolute;left:2879px;top:1208.5px;" width="31" height="31" viewBox="0 0 31 31"><g fill="none" stroke="#161616" stroke-width="2.2" stroke-linecap="butt" stroke-linejoin="round"><rect x="1.7" y="7.6" width="20.7" height="20.7" rx="2"/><path d="M8 7.6 V3.3 Q8 1.3 10 1.3 H26.7 Q28.7 1.3 28.7 3.3 V20.7 Q28.7 22.7 26.7 22.7 H22.4" stroke-dasharray="3.4 2.2"/></g></svg><div style="position:absolute;left:2955.6px;top:1212.5px;width:4.8px;height:4.8px;background:#161616;border-radius:50%"></div><div style="position:absolute;left:2955.6px;top:1220.7px;width:4.8px;height:4.8px;background:#161616;border-radius:50%"></div><div style="position:absolute;left:2955.6px;top:1228.9px;width:4.8px;height:4.8px;background:#161616;border-radius:50%"></div><div style="position:absolute;left:680px;top:1256px;width:2342px;height:66px;background:#e0e0e0"></div><div style="position:absolute;left:698px;top:1273.7px;width:32px;height:32px;border:2px solid #161616;border-radius:4px"></div><div class="t" style="left:759.0px;top:1276.1px;font-size:28.78px;font-weight:400;color:#161616;letter-spacing:1.34px;">1127568</div><div class="t" style="left:958.7px;top:1276.0px;font-size:28.9px;font-weight:400;color:#1745cf;letter-spacing:0.39px;white-space:pre">cloud bug 12345</div><div style="position:absolute;left:1521px;top:1278px;width:24px;height:24px;background:#2f62f5"></div><div style="position:absolute;left:1577px;top:1266.1px;width:77px;height:47.7px;background:#6f6f6f;border-radius:4px"></div><div class="t" style="left:1595.1px;top:1278.6px;font-size:25px;font-weight:400;color:#fff;letter-spacing:0.00px;">386</div><div style="position:absolute;left:1777px;top:1282px;width:16px;height:16px;background:#ec6b6e;border-radius:50%"></div><div class="t" style="left:1809.4px;top:1276.1px;font-size:28.78px;font-weight:400;color:#161616;letter-spacing:0.09px;">Active</div><div style="position:absolute;left:2023px;top:1272px;width:112.4px;height:36px;background:#ffd7d9;border-radius:18px"></div><div class="t" style="left:2039.2px;top:1278.1px;font-size:25.58px;font-weight:400;color:#a2191f;letter-spacing:0.39px;">Critical</div><div style="position:absolute;left:2151.9px;top:1267.9px;width:73px;height:43px;border:2px solid #c6c6c6;border-radius:22px"></div><div class="t" style="left:2170.0px;top:1277.2px;font-size:26.2px;font-weight:400;color:#161616;letter-spacing:0.00px;-webkit-text-stroke:0.90px #161616;">9.1</div><div class="t" style="left:2283.2px;top:1278.1px;font-size:25.58px;font-weight:400;color:#161616;letter-spacing:-0.50px;transform:scaleX(0.9821);transform-origin:0 0;">No Data</div><div class="t" style="left:2467.3px;top:1276.0px;font-size:28.9px;font-weight:400;color:#1745cf;letter-spacing:0.50px;">cloud</div><div style="position:absolute;left:2720px;top:1289px;width:7.5px;height:3px;background:#161616"></div><svg style="position:absolute;left:2879px;top:1274.5px;" width="31" height="31" viewBox="0 0 31 31"><g fill="none" stroke="#161616" stroke-width="2.2" stroke-linecap="butt" stroke-linejoin="round"><rect x="1.7" y="7.6" width="20.7" height="20.7" rx="2"/><path d="M8 7.6 V3.3 Q8 1.3 10 1.3 H26.7 Q28.7 1.3 28.7 3.3 V20.7 Q28.7 22.7 26.7 22.7 H22.4" stroke-dasharray="3.4 2.2"/></g></svg><div style="position:absolute;left:2955.6px;top:1278.5px;width:4.8px;height:4.8px;background:#161616;border-radius:50%"></div><div style="position:absolute;left:2955.6px;top:1286.7px;width:4.8px;height:4.8px;background:#161616;border-radius:50%"></div><div style="position:absolute;left:2955.6px;top:1294.9px;width:4.8px;height:4.8px;background:#161616;border-radius:50%"></div><div style="position:absolute;left:680px;top:1322px;width:881px;height:66px;background:#f4f4f4"></div><div style="position:absolute;left:1561px;top:1322px;width:1261px;height:66px;background:#fff"></div><div style="position:absolute;left:2822px;top:1322px;width:200px;height:66px;background:#f4f4f4"></div><div style="position:absolute;left:680px;top:1322px;width:2342px;height:2px;background:#e0e0e0"></div><div style="position:absolute;left:698px;top:1339.7px;width:32px;height:32px;border:2px solid #161616;border-radius:4px"></div><div class="t" style="left:759.0px;top:1342.1px;font-size:28.78px;font-weight:400;color:#161616;letter-spacing:1.34px;">1127567</div><div class="t" style="left:958.7px;top:1342.0px;font-size:28.9px;font-weight:400;color:#2f62f5;letter-spacing:0.45px;white-space:pre">network bug  title</div><div style="position:absolute;left:1521px;top:1344px;width:24px;height:24px;background:#62bd6f"></div><div style="position:absolute;left:1577px;top:1332.1px;width:64px;height:47.7px;background:#6f6f6f;border-radius:4px"></div><div class="t" style="left:1602.0px;top:1344.6px;font-size:25px;font-weight:400;color:#fff;letter-spacing:0.00px;">1</div><div style="position:absolute;left:1777px;top:1348px;width:16px;height:16px;background:#ec6b6e;border-radius:50%"></div><div class="t" style="left:1807.4px;top:1342.1px;font-size:28.78px;font-weight:400;color:#161616;letter-spacing:0.01px;">New</div><div style="position:absolute;left:2023px;top:1338px;width:79px;height:36px;background:#9ef0f0;border-radius:18px"></div><div class="t" style="left:2038.2px;top:1344.1px;font-size:25.58px;font-weight:400;color:#005d5d;letter-spacing:1.45px;">Info</div><div style="position:absolute;left:2268px;top:1338px;width:123px;height:36px;background:#e0e0e0;border-radius:18px"></div><div class="t" style="left:2283.2px;top:1344.1px;font-size:25.58px;font-weight:400;color:#161616;letter-spacing:-0.50px;transform:scaleX(0.9821);transform-origin:0 0;">No Data</div><div class="t" style="left:2467.3px;top:1342.0px;font-size:28.9px;font-weight:400;color:#2f62f5;letter-spacing:0.55px;">network</div><div style="position:absolute;left:2720px;top:1355px;width:7.5px;height:3px;background:#161616"></div><svg style="position:absolute;left:2879px;top:1340.5px;" width="31" height="31" viewBox="0 0 31 31"><g fill="none" stroke="#161616" stroke-width="2.2" stroke-linecap="butt" stroke-linejoin="round"><rect x="1.7" y="7.6" width="20.7" height="20.7" rx="2"/><path d="M8 7.6 V3.3 Q8 1.3 10 1.3 H26.7 Q28.7 1.3 28.7 3.3 V20.7 Q28.7 22.7 26.7 22.7 H22.4" stroke-dasharray="3.4 2.2"/></g></svg><div style="position:absolute;left:2955.6px;top:1344.5px;width:4.8px;height:4.8px;background:#161616;border-radius:50%"></div><div style="position:absolute;left:2955.6px;top:1352.7px;width:4.8px;height:4.8px;background:#161616;border-radius:50%"></div><div style="position:absolute;left:2955.6px;top:1360.9px;width:4.8px;height:4.8px;background:#161616;border-radius:50%"></div><div style="position:absolute;left:680px;top:1388px;width:881px;height:66px;background:#f4f4f4"></div><div style="position:absolute;left:1561px;top:1388px;width:1261px;height:66px;background:#fff"></div><div style="position:absolute;left:2822px;top:1388px;width:200px;height:66px;background:#f4f4f4"></div><div style="position:absolute;left:680px;top:1388px;width:2342px;height:2px;background:#e0e0e0"></div><div style="position:absolute;left:698px;top:1405.7px;width:32px;height:32px;border:2px solid #161616;border-radius:4px"></div><div class="t" style="left:759.0px;top:1408.1px;font-size:28.78px;font-weight:400;color:#161616;letter-spacing:1.34px;">1127566</div><div class="t" style="left:958.7px;top:1408.0px;font-size:28.9px;font-weight:400;color:#2f62f5;letter-spacing:0.40px;white-space:pre">code bug titile</div><div style="position:absolute;left:1521px;top:1410px;width:24px;height:24px;background:#62bd6f"></div><div style="position:absolute;left:1577px;top:1398.1px;width:77px;height:47.7px;background:#6f6f6f;border-radius:4px"></div><div class="t" style="left:1594.6px;top:1410.6px;font-size:25px;font-weight:400;color:#fff;letter-spacing:0.00px;">156</div><div style="position:absolute;left:1777px;top:1414px;width:16px;height:16px;background:#ec6b6e;border-radius:50%"></div><div class="t" style="left:1807.4px;top:1408.1px;font-size:28.78px;font-weight:400;color:#161616;letter-spacing:0.01px;">New</div><div style="position:absolute;left:2023px;top:1404px;width:84.5px;height:36px;background:#ffd6e8;border-radius:18px"></div><div class="t" style="left:2038.2px;top:1410.1px;font-size:25.58px;font-weight:400;color:#9f1853;letter-spacing:0.31px;">High</div><div style="position:absolute;left:2268px;top:1404px;width:123px;height:36px;background:#e0e0e0;border-radius:18px"></div><div class="t" style="left:2283.2px;top:1410.1px;font-size:25.58px;font-weight:400;color:#161616;letter-spacing:-0.50px;transform:scaleX(0.9821);transform-origin:0 0;">No Data</div><div class="t" style="left:2467.3px;top:1408.0px;font-size:28.9px;font-weight:400;color:#2f62f5;letter-spacing:0.17px;">code</div><div style="position:absolute;left:2720px;top:1421px;width:7.5px;height:3px;background:#161616"></div><svg style="position:absolute;left:2879px;top:1406.5px;" width="31" height="31" viewBox="0 0 31 31"><g fill="none" stroke="#161616" stroke-width="2.2" stroke-linecap="butt" stroke-linejoin="round"><rect x="1.7" y="7.6" width="20.7" height="20.7" rx="2"/><path d="M8 7.6 V3.3 Q8 1.3 10 1.3 H26.7 Q28.7 1.3 28.7 3.3 V20.7 Q28.7 22.7 26.7 22.7 H22.4" stroke-dasharray="3.4 2.2"/></g></svg><div style="position:absolute;left:2955.6px;top:1410.5px;width:4.8px;height:4.8px;background:#161616;border-radius:50%"></div><div style="position:absolute;left:2955.6px;top:1418.7px;width:4.8px;height:4.8px;background:#161616;border-radius:50%"></div><div style="position:absolute;left:2955.6px;top:1426.9px;width:4.8px;height:4.8px;background:#161616;border-radius:50%"></div><div style="position:absolute;left:680px;top:1454px;width:881px;height:66px;background:#f4f4f4"></div><div style="position:absolute;left:1561px;top:1454px;width:1261px;height:66px;background:#fff"></div><div style="position:absolute;left:2822px;top:1454px;width:200px;height:66px;background:#f4f4f4"></div><div style="position:absolute;left:680px;top:1454px;width:2342px;height:2px;background:#e0e0e0"></div><div style="position:absolute;left:698px;top:1471.7px;width:32px;height:32px;border:2px solid #161616;border-radius:4px"></div><div class="t" style="left:759.0px;top:1474.1px;font-size:28.78px;font-weight:400;color:#161616;letter-spacing:1.34px;">1127565</div><div class="t" style="left:960.7px;top:1474.0px;font-size:28.9px;font-weight:400;color:#2f62f5;letter-spacing:0.25px;white-space:pre">web bug title 2</div><div style="position:absolute;left:1521px;top:1476px;width:24px;height:24px;background:#62bd6f"></div><div style="position:absolute;left:1577px;top:1464.1px;width:64px;height:47.7px;background:#6f6f6f;border-radius:4px"></div><div class="t" style="left:1602.0px;top:1476.6px;font-size:25px;font-weight:400;color:#fff;letter-spacing:0.00px;">1</div><div style="position:absolute;left:1777px;top:1480px;width:16px;height:16px;background:#ec6b6e;border-radius:50%"></div><div class="t" style="left:1807.4px;top:1474.1px;font-size:28.78px;font-weight:400;color:#161616;letter-spacing:0.01px;">New</div><div style="position:absolute;left:2023px;top:1470px;width:78.4px;height:36px;background:#d0e2ff;border-radius:18px"></div><div class="t" style="left:2038.2px;top:1476.1px;font-size:25.58px;font-weight:400;color:#0043ce;letter-spacing:-0.50px;transform:scaleX(0.9944);transform-origin:0 0;">Low</div><div style="position:absolute;left:2268px;top:1470px;width:123px;height:36px;background:#e0e0e0;border-radius:18px"></div><div class="t" style="left:2283.2px;top:1476.1px;font-size:25.58px;font-weight:400;color:#161616;letter-spacing:-0.50px;transform:scaleX(0.9821);transform-origin:0 0;">No Data</div><div class="t" style="left:2469.3px;top:1474.0px;font-size:28.9px;font-weight:400;color:#2f62f5;letter-spacing:-0.32px;">web</div><div style="position:absolute;left:2720px;top:1487px;width:7.5px;height:3px;background:#161616"></div><svg style="position:absolute;left:2879px;top:1472.5px;" width="31" height="31" viewBox="0 0 31 31"><g fill="none" stroke="#161616" stroke-width="2.2" stroke-linecap="butt" stroke-linejoin="round"><rect x="1.7" y="7.6" width="20.7" height="20.7" rx="2"/><path d="M8 7.6 V3.3 Q8 1.3 10 1.3 H26.7 Q28.7 1.3 28.7 3.3 V20.7 Q28.7 22.7 26.7 22.7 H22.4" stroke-dasharray="3.4 2.2"/></g></svg><div style="position:absolute;left:2955.6px;top:1476.5px;width:4.8px;height:4.8px;background:#161616;border-radius:50%"></div><div style="position:absolute;left:2955.6px;top:1484.7px;width:4.8px;height:4.8px;background:#161616;border-radius:50%"></div><div style="position:absolute;left:2955.6px;top:1492.9px;width:4.8px;height:4.8px;background:#161616;border-radius:50%"></div><div style="position:absolute;left:680px;top:1520px;width:881px;height:66px;background:#f4f4f4"></div><div style="position:absolute;left:1561px;top:1520px;width:1261px;height:66px;background:#fff"></div><div style="position:absolute;left:2822px;top:1520px;width:200px;height:66px;background:#f4f4f4"></div><div style="position:absolute;left:680px;top:1520px;width:2342px;height:2px;background:#e0e0e0"></div><div style="position:absolute;left:698px;top:1537.7px;width:32px;height:32px;border:2px solid #161616;border-radius:4px"></div><div class="t" style="left:759.0px;top:1540.1px;font-size:28.78px;font-weight:400;color:#161616;letter-spacing:1.17px;">1127564</div><div class="t" style="left:960.7px;top:1540.0px;font-size:28.9px;font-weight:400;color:#2f62f5;letter-spacing:0.23px;white-space:pre">web bug  titile</div><div style="position:absolute;left:1521px;top:1542px;width:24px;height:24px;background:#62bd6f"></div><div style="position:absolute;left:1577px;top:1530.1px;width:64px;height:47.7px;background:#6f6f6f;border-radius:4px"></div><div class="t" style="left:1602.0px;top:1542.6px;font-size:25px;font-weight:400;color:#fff;letter-spacing:0.00px;">1</div><div style="position:absolute;left:1777px;top:1546px;width:16px;height:16px;background:#ec6b6e;border-radius:50%"></div><div class="t" style="left:1807.4px;top:1540.1px;font-size:28.78px;font-weight:400;color:#161616;letter-spacing:0.01px;">New</div><div style="position:absolute;left:2023px;top:1536px;width:123px;height:36px;background:#e0e0e0;border-radius:18px"></div><div class="t" style="left:2038.2px;top:1542.1px;font-size:25.58px;font-weight:400;color:#161616;letter-spacing:0.23px;">Medium</div><div style="position:absolute;left:2268px;top:1536px;width:123px;height:36px;background:#e0e0e0;border-radius:18px"></div><div class="t" style="left:2283.2px;top:1542.1px;font-size:25.58px;font-weight:400;color:#161616;letter-spacing:-0.50px;transform:scaleX(0.9821);transform-origin:0 0;">No Data</div><div style="position:absolute;left:680px;top:1586px;width:881px;height:66px;background:#f4f4f4"></div><div style="position:absolute;left:1561px;top:1586px;width:1261px;height:66px;background:#fff"></div><div style="position:absolute;left:2822px;top:1586px;width:200px;height:66px;background:#f4f4f4"></div><div style="position:absolute;left:680px;top:1586px;width:2342px;height:2px;background:#e0e0e0"></div><div style="position:absolute;left:698px;top:1603.7px;width:32px;height:32px;border:2px solid #161616;border-radius:4px"></div><div class="t" style="left:759.0px;top:1606.1px;font-size:28.78px;font-weight:400;color:#161616;letter-spacing:1.34px;">1127563</div><div class="t" style="left:959.7px;top:1606.1px;font-size:28.78px;font-weight:400;color:#2f62f5;letter-spacing:-0.32px;white-space:pre">Test Finding 1 - Weak Password Policy</div><div style="position:absolute;left:1521px;top:1608px;width:24px;height:24px;background:#62bd6f"></div><div style="position:absolute;left:1577px;top:1596.1px;width:64px;height:47.7px;background:#6f6f6f;border-radius:4px"></div><div class="t" style="left:1595.0px;top:1608.6px;font-size:25px;font-weight:400;color:#fff;letter-spacing:0.00px;">85</div><div style="position:absolute;left:1777px;top:1612px;width:16px;height:16px;background:#ec6b6e;border-radius:50%"></div><div class="t" style="left:1807.4px;top:1606.1px;font-size:28.78px;font-weight:400;color:#161616;letter-spacing:0.01px;">New</div><div style="position:absolute;left:2023px;top:1602px;width:123px;height:36px;background:#e0e0e0;border-radius:18px"></div><div class="t" style="left:2038.2px;top:1608.1px;font-size:25.58px;font-weight:400;color:#161616;letter-spacing:0.23px;">Medium</div><div style="position:absolute;left:2162.5px;top:1597.9px;width:73px;height:43px;border:2px solid #c6c6c6;border-radius:22px"></div><div class="t" style="left:2180.6px;top:1607.2px;font-size:26.2px;font-weight:400;color:#161616;letter-spacing:0.00px;-webkit-text-stroke:0.90px #161616;">3.0</div><div style="position:absolute;left:2268px;top:1602px;width:123px;height:36px;background:#e0e0e0;border-radius:18px"></div><div class="t" style="left:2283.2px;top:1608.1px;font-size:25.58px;font-weight:400;color:#161616;letter-spacing:-0.50px;transform:scaleX(0.9821);transform-origin:0 0;">No Data</div><div style="position:absolute;left:680px;top:1652px;width:881px;height:66px;background:#f4f4f4"></div><div style="position:absolute;left:1561px;top:1652px;width:1261px;height:66px;background:#fff"></div><div style="position:absolute;left:2822px;top:1652px;width:200px;height:66px;background:#f4f4f4"></div><div style="position:absolute;left:680px;top:1652px;width:2342px;height:2px;background:#e0e0e0"></div><div style="position:absolute;left:698px;top:1669.7px;width:32px;height:32px;border:2px solid #161616;border-radius:4px"></div><div class="t" style="left:759.0px;top:1672.1px;font-size:28.78px;font-weight:400;color:#161616;letter-spacing:1.34px;">1127562</div><div class="t" style="left:959.7px;top:1672.1px;font-size:28.78px;font-weight:400;color:#2f62f5;letter-spacing:-0.17px;white-space:pre">Test Finding 2 - Missing Security Headers</div><div style="position:absolute;left:1521px;top:1674px;width:24px;height:24px;background:#62bd6f"></div><div style="position:absolute;left:1577px;top:1662.1px;width:64px;height:47.7px;background:#6f6f6f;border-radius:4px"></div><div class="t" style="left:1602.5px;top:1674.6px;font-size:25px;font-weight:400;color:#fff;letter-spacing:0.00px;">0</div><div style="position:absolute;left:1777px;top:1678px;width:16px;height:16px;background:#a7f0ba;border-radius:50%"></div><div class="t" style="left:1809.4px;top:1672.1px;font-size:28.78px;font-weight:400;color:#161616;letter-spacing:-0.32px;">Accepted Risk</div><div style="position:absolute;left:2023px;top:1668px;width:123px;height:36px;background:#e0e0e0;border-radius:18px"></div><div class="t" style="left:2038.2px;top:1674.1px;font-size:25.58px;font-weight:400;color:#161616;letter-spacing:0.23px;">Medium</div><div style="position:absolute;left:2162.5px;top:1663.9px;width:73px;height:43px;border:2px solid #c6c6c6;border-radius:22px"></div><div class="t" style="left:2180.6px;top:1673.2px;font-size:26.2px;font-weight:400;color:#161616;letter-spacing:0.00px;-webkit-text-stroke:0.90px #161616;">5.5</div><div style="position:absolute;left:2268px;top:1668px;width:123px;height:36px;background:#e0e0e0;border-radius:18px"></div><div class="t" style="left:2283.2px;top:1674.1px;font-size:25.58px;font-weight:400;color:#161616;letter-spacing:-0.50px;transform:scaleX(0.9821);transform-origin:0 0;">No Data</div><div class="t" style="left:2467.3px;top:1672.0px;font-size:28.9px;font-weight:400;color:#2f62f5;letter-spacing:1.08px;">l-iae1-601600-5</div><div style="position:absolute;left:2720px;top:1685px;width:7.5px;height:3px;background:#161616"></div><svg style="position:absolute;left:2879px;top:1670.5px;" width="31" height="31" viewBox="0 0 31 31"><g fill="none" stroke="#161616" stroke-width="2.2" stroke-linecap="butt" stroke-linejoin="round"><rect x="1.7" y="7.6" width="20.7" height="20.7" rx="2"/><path d="M8 7.6 V3.3 Q8 1.3 10 1.3 H26.7 Q28.7 1.3 28.7 3.3 V20.7 Q28.7 22.7 26.7 22.7 H22.4" stroke-dasharray="3.4 2.2"/></g></svg><div style="position:absolute;left:2955.6px;top:1674.5px;width:4.8px;height:4.8px;background:#161616;border-radius:50%"></div><div style="position:absolute;left:2955.6px;top:1682.7px;width:4.8px;height:4.8px;background:#161616;border-radius:50%"></div><div style="position:absolute;left:2955.6px;top:1690.9px;width:4.8px;height:4.8px;background:#161616;border-radius:50%"></div><div style="position:absolute;left:2414.5px;top:1529.7px;width:575px;height:136.3px;background:#393939;box-shadow:0 3px 8px rgba(0,0,0,0.35)"></div><div style="position:absolute;left:2414.5px;top:1529.7px;width:6px;height:136.3px;background:#66bd6b"></div><svg style="position:absolute;left:2454px;top:1564px;" width="36" height="36" viewBox="0 0 36 36"><circle cx="18" cy="18" r="18" fill="#66bd6b"/><polyline points="10.5,18.5 15.5,23.5 25,13.5" fill="none" stroke="#2a2a2a" stroke-width="2.6"/></svg><div class="t" style="left:2524.0px;top:1567.1px;font-size:26.37px;font-weight:400;color:#fff;letter-spacing:1.68px;-webkit-text-stroke:0.91px #fff;">Comment has been</div><div class="t" style="left:2525.0px;top:1603.0px;font-size:26.81px;font-weight:400;color:#fff;letter-spacing:1.52px;-webkit-text-stroke:0.92px #fff;">successfully added</div><svg style="position:absolute;left:2933px;top:1569px;" width="19" height="19" viewBox="0 0 19 19"><path d="M1.2 1.2 L17.6 17.6 M17.6 1.2 L1.2 17.6" stroke="#fff" stroke-width="2"/></svg><div style="position:absolute;left:0px;top:0px;width:3022px;height:88px;background:#161616"></div><div style="position:absolute;left:0px;top:86px;width:3022px;height:2px;background:#333333"></div><div style="position:absolute;left:30px;top:27px;width:32px;height:2.7px;background:#fff"></div><div style="position:absolute;left:30px;top:34.1px;width:32px;height:2.7px;background:#fff"></div><div style="position:absolute;left:30px;top:41.2px;width:32px;height:2.7px;background:#fff"></div><div style="position:absolute;left:30px;top:48.3px;width:32px;height:2.7px;background:#fff"></div><svg style="position:absolute;left:112px;top:22px;" width="22" height="29" viewBox="0 0 22 29"><defs><linearGradient id="bg1" x1="0" y1="0" x2="0" y2="1"><stop offset="0" stop-color="#43a653"/><stop offset="0.5" stop-color="#86d28f"/><stop offset="1" stop-color="#3f9f4e"/></linearGradient></defs><path d="M17 1.8 C14.8 7 12.5 11 10.8 14.4 C9 18 7.5 22 5.3 26.8" fill="none" stroke="url(#bg1)" stroke-width="4.2" stroke-linecap="round"/><path d="M1.5 14.4 C6 11.2 15 11.4 20 13.6 C20.3 14.4 20.3 15 20 15.6 C15 17.6 6 17.6 1.5 14.4 Z" fill="#6cc477"/><path d="M11 11.8 L11.9 14.4 L14.2 15.1 L11.9 15.8 L11 18.2 L10.1 15.8 L7.8 15.1 L10.1 14.4 Z" fill="#ffffff" opacity="0.85"/></svg><div class="t" style="left:136.0px;top:19.4px;font-size:35.5px;font-weight:700;color:#ffffff;letter-spacing:-0.50px;transform:scaleX(0.9758);transform-origin:0 0;">strobes</div><div class="t" style="left:258.5px;top:18.9px;font-size:5.5px;font-weight:400;color:#ffffff;letter-spacing:0.00px;-webkit-text-stroke:0.19px #ffffff;transform:scaleX(0.7177);transform-origin:0 0;">TM</div><div class="t" style="left:304.5px;top:25.8px;font-size:27.61px;font-weight:400;color:#ffffff;letter-spacing:0.00px;-webkit-text-stroke:0.95px #ffffff;transform:scaleX(0.9545);transform-origin:0 0;">CTEM</div><div style="position:absolute;left:399.5px;top:21px;width:1.6px;height:40px;background:#8d8d8d"></div><div class="t" style="left:423.0px;top:25.1px;font-size:29.07px;font-weight:400;color:#ffffff;letter-spacing:0.18px;">Automation</div><svg style="position:absolute;left:633px;top:32px;" width="24" height="15" viewBox="0 0 24 15"><polyline points="2,2 12,12.5 22,2" fill="none" stroke="#fff" stroke-width="2.1"/></svg><div style="position:absolute;left:2135px;top:12px;width:200px;height:50.5px;border:2px solid #474747;border-radius:26px"></div><div class="t" style="left:2152.0px;top:23.9px;font-size:29.07px;font-weight:400;color:#ffffff;letter-spacing:-0.50px;transform:scaleX(0.9871);transform-origin:0 0;">Manage Plan</div><svg style="position:absolute;left:2380px;top:24px;" width="38" height="28" viewBox="0 0 38 28"><rect x="2.2" y="2.2" width="33.6" height="23.6" rx="2" fill="none" stroke="#fff" stroke-width="2.4"/><rect x="2.2" y="7.4" width="33.6" height="2.6" fill="#fff"/><rect x="6.5" y="19" width="12" height="2.4" fill="#fff"/></svg><svg style="position:absolute;left:2479px;top:22px;" width="32" height="32" viewBox="0 0 32 32"><circle cx="13" cy="13" r="10.8" fill="none" stroke="#fff" stroke-width="2"/><line x1="20.8" y1="20.8" x2="29.6" y2="29.6" stroke="#fff" stroke-width="2.2"/></svg><div style="position:absolute;left:2559px;top:9px;width:159px;height:56px;border:2px solid #d0d0d0;border-radius:28px"></div><svg style="position:absolute;left:2570px;top:16px;" width="42" height="42" viewBox="0 0 42 42"><defs><radialGradient id="orb" cx="0.55" cy="0.45" r="0.6"><stop offset="0" stop-color="#3a3a3a"/><stop offset="0.5" stop-color="#2b5e5e"/><stop offset="1" stop-color="#1d4040"/></radialGradient><linearGradient id="orb2" x1="0" y1="1" x2="1" y2="0"><stop offset="0" stop-color="#c77dd0" stop-opacity="0.9"/><stop offset="0.45" stop-color="#555" stop-opacity="0.2"/><stop offset="1" stop-color="#5fc9c9" stop-opacity="0.0"/></linearGradient></defs><circle cx="21" cy="21" r="20.5" fill="url(#orb)"/><circle cx="21" cy="21" r="20.5" fill="url(#orb2)"/><path d="M14 40 C22 30 30 34 40 22 C40 32 30 42 21 41.5 Z" fill="#4fb3b3" opacity="0.55"/><path d="M1 18 C8 20 10 26 12 40 C5 36 1 28 1 18 Z" fill="#8e3c8e" opacity="0.6"/></svg><div class="t" style="left:2621.7px;top:26.2px;font-size:23.47px;font-weight:400;color:#ffffff;letter-spacing:1.26px;-webkit-text-stroke:0.81px #ffffff;">Ask AI</div><svg style="position:absolute;left:2764px;top:21px;" width="37" height="37" viewBox="0 0 37 37"><g fill="none" stroke="#fff" stroke-width="2.2"><path d="M11 33 H3.5 V3.5 H31 V12"/><line x1="3.5" y1="10" x2="31" y2="10"/><circle cx="25" cy="25" r="9.5"/></g><path d="M22.3 20.5 L29 25 L22.3 29.5 Z" fill="#fff"/></svg><svg style="position:absolute;left:2859px;top:17px;" width="38" height="40" viewBox="0 0 38 40"><g fill="none" stroke="#fff" stroke-width="2.2" stroke-linejoin="round"><path d="M2.8 29 L6.8 24.5 V16.8 A12.2 12.2 0 0 1 31.2 16.8 V24.5 L35.2 29 Z"/><path d="M13.8 29.5 A5.2 5.2 0 0 0 24.2 29.5"/><line x1="19" y1="1.8" x2="19" y2="4.6"/></g></svg><div style="position:absolute;left:2883.6px;top:-0.2px;width:32.4px;height:32.4px;background:#c9302c;border-radius:50%"></div><div class="t" style="left:2888.5px;top:8.0px;font-size:17.73px;font-weight:400;color:#161616;letter-spacing:2.15px;">9+</div><svg style="position:absolute;left:2954px;top:18px;" width="40" height="40" viewBox="0 0 40 40"><g fill="none" stroke="#fff" stroke-width="2.2"><circle cx="20" cy="20" r="16.4"/><circle cx="20" cy="16.4" r="6"/><path d="M9.6 32.6 C11 27.8 14.5 25.6 20 25.6 C25.5 25.6 29 27.8 30.4 32.6"/></g></svg></body></html>
